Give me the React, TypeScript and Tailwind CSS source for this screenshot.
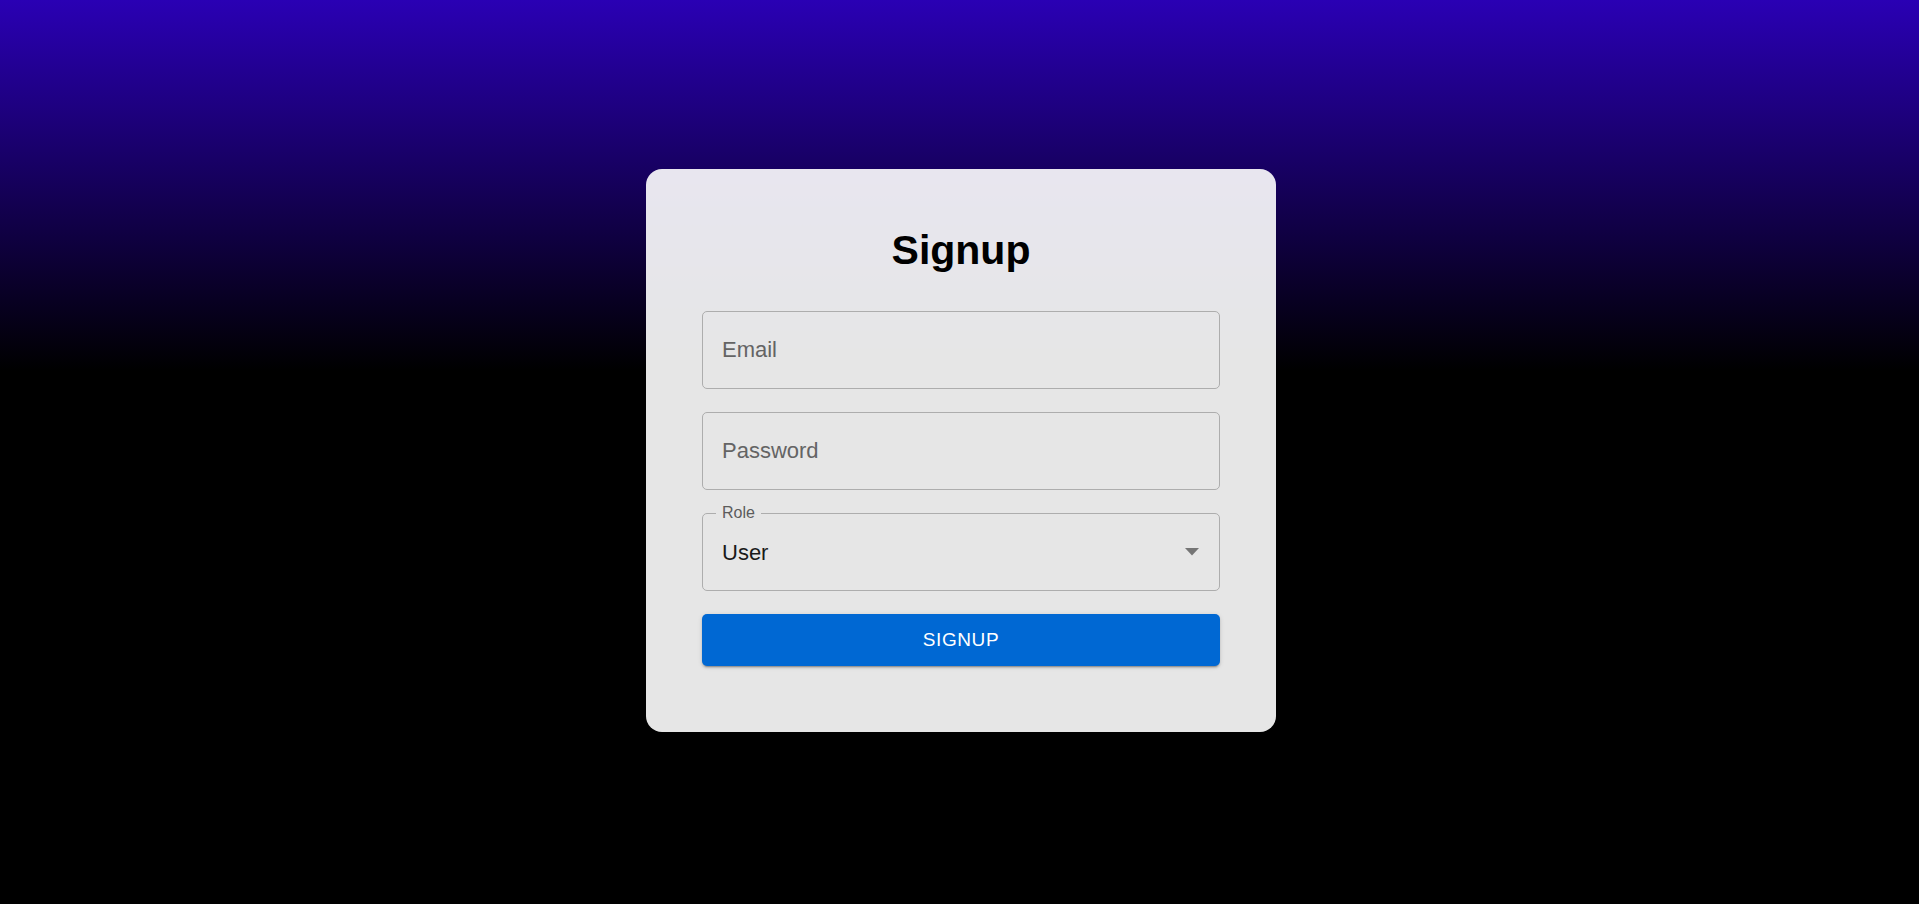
import { useState } from "react";

export default function App() {
  const [email, setEmail] = useState("");
  const [password, setPassword] = useState("");

  return (
    <div className="min-h-screen w-full flex items-center justify-center pb-[3px] pl-[3px] bg-[linear-gradient(to_bottom,#2a00b4_0%,#000000_41%)] font-['Liberation_Sans',Arial,sans-serif]">
      <div className="w-[630px] h-[563px] rounded-[16px] bg-white/90 px-[56px] pt-[57px]">
        <h1 className="text-center text-[41px] leading-[48px] font-bold text-black">Signup</h1>
        <form className="mt-[37px] flex flex-col gap-[23px]" onSubmit={(e) => e.preventDefault()}>
          <input
            type="email"
            value={email}
            onChange={(e) => setEmail(e.target.value)}
            placeholder="Email"
            className="h-[78px] w-full rounded-[5px] border border-[#adadad] bg-transparent px-[19px] text-[22px] text-[#1a1a1a] outline-none placeholder:text-[#646464]"
          />
          <input
            type="password"
            value={password}
            onChange={(e) => setPassword(e.target.value)}
            placeholder="Password"
            className="h-[78px] w-full rounded-[5px] border border-[#adadad] bg-transparent px-[19px] text-[22px] text-[#1a1a1a] outline-none placeholder:text-[#646464]"
          />
          <div className="relative h-[78px] w-full">
            <fieldset className="absolute left-0 right-0 bottom-0 top-[-8px] m-0 rounded-[5px] border border-[#adadad] px-[13px] py-0 pointer-events-none">
              <legend className="px-[6px] text-[16px] leading-[16px] text-[#5c5c5c]">Role</legend>
            </fieldset>
            <div className="flex h-full items-center justify-between pl-[20px] pr-[21px]">
              <span className="text-[22px] text-[#1a1a1a]">User</span>
              <svg width="14" height="8" viewBox="0 0 14 8">
                <path d="M0 0 L14 0 L7 7.5 Z" fill="#757575" />
              </svg>
            </div>
          </div>
          <button
            type="submit"
            className="h-[52px] w-full rounded-[5px] bg-[#0068d3] text-[19px] tracking-[0.03em] text-white shadow-[0_3px_1px_-2px_rgba(0,0,0,0.2),0_2px_2px_0_rgba(0,0,0,0.14),0_1px_5px_0_rgba(0,0,0,0.12)]"
          >
            SIGNUP
          </button>
        </form>
      </div>
    </div>
  );
}
